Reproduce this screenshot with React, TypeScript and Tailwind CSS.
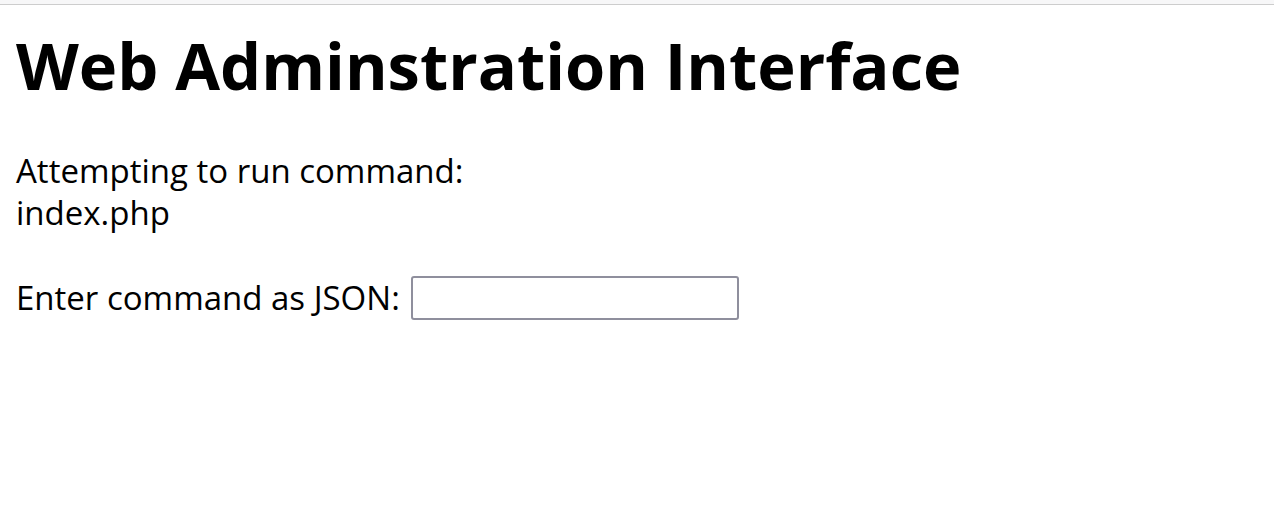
const App = () => {
  return (
    <div className="min-h-screen bg-white text-black" style={{ fontFamily: '"Open Sans", "Noto Sans", sans-serif' }}>
      <div className="h-[5px] bg-[#f7f7f8] border-b border-[#cdcdcd]" />
      <main className="px-[16px]">
        <h1 className="mt-[20px] text-[65px] leading-[80px] font-bold">Web Adminstration Interface</h1>
        <div className="mt-[45px] text-[33px] leading-[42px]">
          <p>Attempting to run command:</p>
          <p>index.php</p>
        </div>
        <div className="mt-[42px] flex items-center gap-[11px] text-[33px] leading-[42px]">
          <label htmlFor="cmd">Enter command as JSON:</label>
          <input
            id="cmd"
            type="text"
            className="w-[328px] h-[44px] border-2 border-[#8f8f9d] rounded-[3px] bg-white px-2 outline-none"
          />
        </div>
      </main>
    </div>
  );
};

export default App;
